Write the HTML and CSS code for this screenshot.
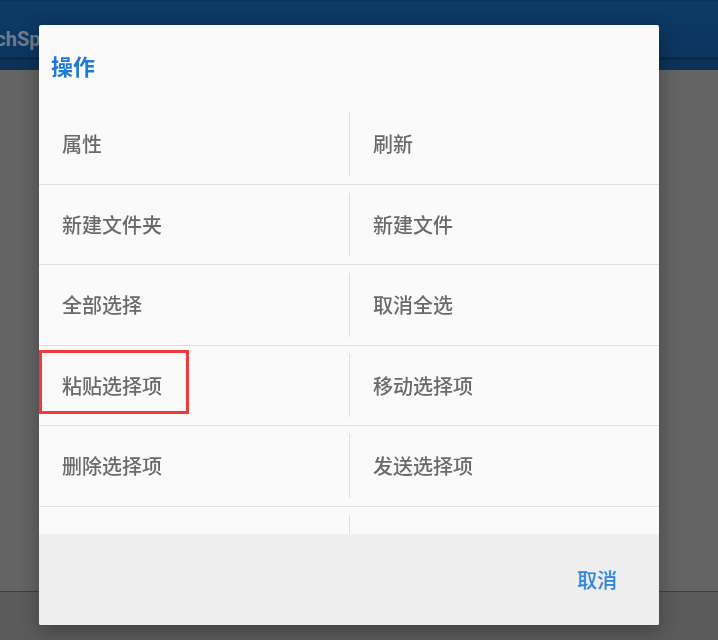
FILE: index.html
```html
<!DOCTYPE html>
<html lang="zh-CN">
<head>
  <meta charset="UTF-8">
  <meta name="viewport" content="width=device-width, initial-scale=1.0">
  <title>操作</title>
  <link rel="stylesheet" href="styles.css">
</head>
<body>
  <div class="app">
    <div class="app__bar">
      <span class="app__title">TechSpace</span>
    </div>
    <div class="app__content"></div>
    <div class="app__bottom"></div>
  </div>

  <div class="dialog">
    <div class="dialog__body">
      <h2 class="dialog__title">操作</h2>
      <div class="dialog__row">
        <div class="dialog__item">属性</div>
        <div class="dialog__sep"></div>
        <div class="dialog__item">刷新</div>
      </div>
      <div class="dialog__row">
        <div class="dialog__item">新建文件夹</div>
        <div class="dialog__sep"></div>
        <div class="dialog__item">新建文件</div>
      </div>
      <div class="dialog__row">
        <div class="dialog__item">全部选择</div>
        <div class="dialog__sep"></div>
        <div class="dialog__item">取消全选</div>
      </div>
      <div class="dialog__row">
        <div class="dialog__item dialog__item--marked">粘贴选择项<span class="mark"></span></div>
        <div class="dialog__sep"></div>
        <div class="dialog__item">移动选择项</div>
      </div>
      <div class="dialog__row">
        <div class="dialog__item">删除选择项</div>
        <div class="dialog__sep"></div>
        <div class="dialog__item">发送选择项</div>
      </div>
      <div class="dialog__row">
        <div class="dialog__item"></div>
        <div class="dialog__sep"></div>
        <div class="dialog__item"></div>
      </div>
    </div>
    <div class="dialog__footer">
      <span class="dialog__btn">取消</span>
    </div>
  </div>
</body>
</html>
```

FILE: styles.css
```css
body {
  margin: 0;
  font-family: "Noto Sans CJK SC", "Noto Sans", sans-serif;
}

* {
  margin: 0;
  box-sizing: border-box;
}

.app {
  display: flex;
  flex-direction: column;
  width: 100vw;
  height: 100vh;
  background-color: #646464;
}

.app__bar {
  display: flex;
  align-items: center;
  height: 70px;
  padding: 7px 0 0 0;
  background: linear-gradient(#0a2d52 0, #0c3a66 2px, #0c3560 57px, #0a2a48 57px, #0a2a48 60px, #0c3356 60px);
  overflow: hidden;
}

.app__title {
  margin-left: -27px;
  font-family: Roboto, "Liberation Sans", sans-serif;
  font-weight: 700;
  font-size: 20px;
  color: #6f7c89;
}

.app__content {
  flex: 1;
}

.app__bottom {
  height: 49px;
  border-top: 1px solid #1f4a58;
  background-color: #5b5b5b;
}

.dialog {
  position: fixed;
  top: 25px;
  left: 39px;
  width: 620px;
  height: 600px;
  display: flex;
  flex-direction: column;
  background-color: #fafafa;
  border-radius: 2px;
  box-shadow: 0 6px 20px rgba(0, 0, 0, .3);
  overflow: hidden;
}

.dialog__body {
  height: 509px;
  overflow: hidden;
}

.dialog__title {
  display: flex;
  align-items: center;
  height: 79px;
  padding: 0 0 0 12px;
  font-size: 22px;
  font-weight: 700;
  color: #1f7ad6;
}

.dialog__row {
  display: flex;
  height: 80.5px;
  border-bottom: 1px solid #e0e0e0;
}

.dialog__item {
  position: relative;
  display: flex;
  align-items: center;
  width: 310px;
  padding-left: 23px;
  font-size: 20px;
  font-weight: 500;
  color: #6a6a6a;
}

.dialog__item + .dialog__sep + .dialog__item {
  width: 309px;
}

.dialog__sep {
  width: 1px;
  margin: 8px 0;
  background-color: #dedede;
}

.mark {
  position: absolute;
  left: 0;
  top: 4px;
  width: 150px;
  height: 64px;
  border: 3px solid #f03a3a;
}

.dialog__footer {
  display: flex;
  justify-content: flex-end;
  align-items: center;
  flex: 1;
  padding-right: 42px;
  background-color: #eeeeee;
}

.dialog__btn {
  font-size: 20px;
  font-weight: 500;
  color: #2a86de;
  cursor: pointer;
}
```
